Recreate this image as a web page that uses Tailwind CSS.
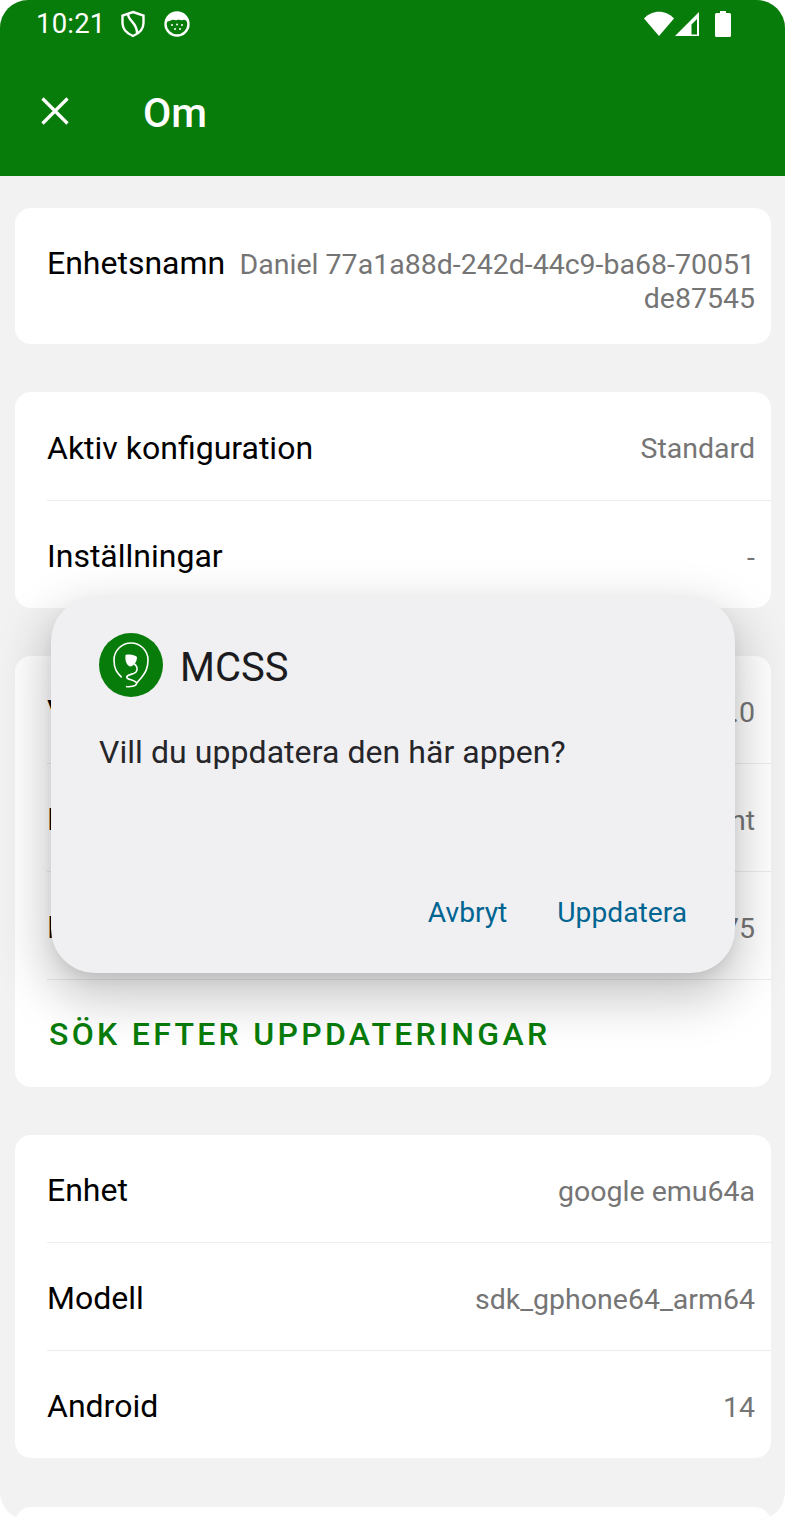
<!DOCTYPE html>
<html><head><meta charset="utf-8"><script src="https://cdn.jsdelivr.net/npm/@tailwindcss/browser@4"></script></head>
<body class="bg-white">
<div class="relative w-[785px] h-[1520px] overflow-hidden rounded-[28px] bg-[#f2f2f2] font-['Roboto',sans-serif]">
  <header class="h-[176px] bg-[#087c0a] text-white">
    <div class="h-[48px] flex items-center pl-[36px] pr-[54px]">
      <span class="text-[27.5px] leading-none tracking-[0.2px]">10:21</span>
      <svg class="ml-[15px]" width="26" height="28" viewBox="0 0 26 28" fill="none" stroke="white" stroke-width="2.4"><path d="M13 2 L23.500 5.500 V13 C23.500 19 19 23.500 13 26 C7 23.500 2.500 19 2.500 13 V5.500 Z"/><path d="M8 4 C8 11 18 13 17 24"/></svg>
      <svg class="ml-[18px]" width="26" height="26" viewBox="0 0 26 26"><circle cx="13" cy="13" r="11.500" fill="none" stroke="white" stroke-width="2.400"/><path d="M2 11 C3 5 8 2 13 2 C18 2 23 5 24 11 C22 10 21 8 19 9 C17 10 16 8 13 9 C11 10 10 8 8 9 C6 10 5 10 2 11 Z" fill="white"/><circle cx="8" cy="14" r="1" fill="white"/><circle cx="13" cy="13.500" r="1" fill="white"/><circle cx="18" cy="14" r="1" fill="white"/><circle cx="11" cy="18" r="1" fill="white"/><circle cx="16" cy="18" r="1" fill="white"/></svg>
      <div class="ml-auto flex items-center">
        <svg width="30" height="26" viewBox="0 0 30 26"><path d="M0 7.500 C8 -1.500 22 -1.500 30 7.500 L15 25 Z" fill="white"/></svg>
        <svg width="26" height="26" viewBox="0 0 26 26"><path d="M25 1 V25 H1 Z M23 8 L17.500 13.500 V23.500 H23 Z" fill="white" fill-rule="evenodd"/></svg>
        <svg class="ml-[15px]" width="16" height="26" viewBox="0 0 16 26"><path d="M5 0 H11 V2 H14.500 A1.500 1.500 0 0 1 16 3.500 V24.500 A1.500 1.500 0 0 1 14.500 26 H1.500 A1.500 1.500 0 0 1 0 24.500 V3.500 A1.500 1.500 0 0 1 1.500 2 H5 Z" fill="white"/></svg>
      </div>
    </div>
    <div class="h-[128px] flex items-center pl-[41px] pb-[2px]">
      <svg width="28" height="28" viewBox="0 0 28 28" stroke="white" stroke-width="3.200"><path d="M1.500 1.500 L26.500 26.500 M26.500 1.500 L1.500 26.500"/></svg>
      <h1 class="ml-[74px] pt-[4px] text-[41px] leading-none font-medium">Om</h1>
    </div>
  </header>
  <main class="pl-[15px] pr-[14px] pt-[32px] flex flex-col gap-[48px] text-[32px] text-black">
    <section class="bg-white rounded-[16px] h-[136px] flex justify-between pl-[32px] pr-[16px] pt-[36px]">
      <span class="leading-[38px] shrink-0">Enhetsnamn</span>
      <span class="w-[520px] text-right text-[28.5px] leading-[34px] pt-[4px] text-[#757575]">Daniel 77a1a88d-242d-44c9-ba68-70051 de87545</span>
    </section>
    <section class="bg-white rounded-[16px] pl-[32px]">
      <div class="h-[109px] pt-[3px] flex items-center justify-between pr-[16px] border-b border-[#ececec]"><span>Aktiv konfiguration</span><span class="pt-[4px] text-[28.5px] text-[#757575]">Standard</span></div>
      <div class="h-[107px] pt-[3px] flex items-center justify-between pr-[16px]"><span>Inställningar</span><span class="pt-[4px] text-[28.5px] text-[#757575]">-</span></div>
    </section>
    <section class="bg-white rounded-[16px] pl-[32px]">
      <div class="h-[108px] pt-[3px] flex items-center justify-between pr-[16px] border-b border-[#ececec]"><span>Version</span><span class="pt-[4px] text-[28.5px] text-[#757575]">1.0</span></div>
      <div class="h-[108px] pt-[3px] flex items-center justify-between pr-[16px] border-b border-[#ececec]"><span>Miljö</span><span class="pt-[4px] text-[28.5px] text-[#757575]">Development</span></div>
      <div class="h-[108px] pt-[3px] flex items-center justify-between pr-[16px] border-b border-[#ececec]"><span>Build</span><span class="pt-[4px] text-[28.5px] text-[#757575]">75</span></div>
      <div class="h-[107px] pt-[1px] flex items-center"><span class="ml-[2px] text-[#087c0a] text-[32px] font-medium tracking-[3.300px]">SÖK EFTER UPPDATERINGAR</span></div>
    </section>
    <section class="bg-white rounded-[16px] pl-[32px]">
      <div class="h-[108px] pt-[3px] flex items-center justify-between pr-[16px] border-b border-[#ececec]"><span>Enhet</span><span class="pt-[4px] text-[28.5px] text-[#757575]">google emu64a</span></div>
      <div class="h-[108px] pt-[3px] flex items-center justify-between pr-[16px] border-b border-[#ececec]"><span>Modell</span><span class="pt-[4px] text-[28.5px] text-[#757575]">sdk_gphone64_arm64</span></div>
      <div class="h-[107px] pt-[3px] flex items-center justify-between pr-[16px]"><span>Android</span><span class="pt-[4px] text-[28.5px] text-[#757575]">14</span></div>
    </section>
    <section class="bg-white rounded-[16px] h-[108px] mt-[1px]"></section>
  </main>
  <div class="absolute left-[51px] top-[597px] w-[684px] h-[376px] rounded-[44px] bg-[#f0f0f3] shadow-[0_20px_50px_6px_rgba(0,0,0,0.22),0_8px_16px_-4px_rgba(0,0,0,0.1)] flex flex-col pl-[48px] pr-[48px]">
    <div class="flex items-center mt-[36px] h-[64px]">
      <svg width="64" height="64" viewBox="0 0 64 64"><circle cx="32" cy="32" r="32" fill="#087c0a"/><path d="M22.700 44.300 C18 40 15 36 15 27 A17 17 0 0 1 49 27 C49 36 46 40 42.700 44.300 L37.700 50" fill="none" stroke="white" stroke-width="1.600"/><path d="M26.500 22 C31 21 36 22 38 24 C38 29 35 33 31 33.500 C27 32 26 27 26.500 22 Z" fill="white"/><path d="M35.300 31 C38 33 39 36 37 39 C34 42 28 41 27.700 44.300 C28 47 37 46.500 37.700 50.300 C37 53.500 31 54 27 53.500" fill="none" stroke="white" stroke-width="1.600"/></svg>
      <span class="ml-[17px] pt-[5px] text-[40px] leading-none text-[#1c1c20]">MCSS</span>
    </div>
    <p class="mt-[35px] text-[32px] leading-[40px] tracking-[0.06px] text-[#26262a]">Vill du uppdatera den här appen?</p>
    <div class="mt-auto mb-[44px] flex justify-end gap-[50px] text-[28.2px] leading-[32px] text-[#006591]"><span>Avbryt</span><span>Uppdatera</span></div>
  </div>
</div>
</body></html>
